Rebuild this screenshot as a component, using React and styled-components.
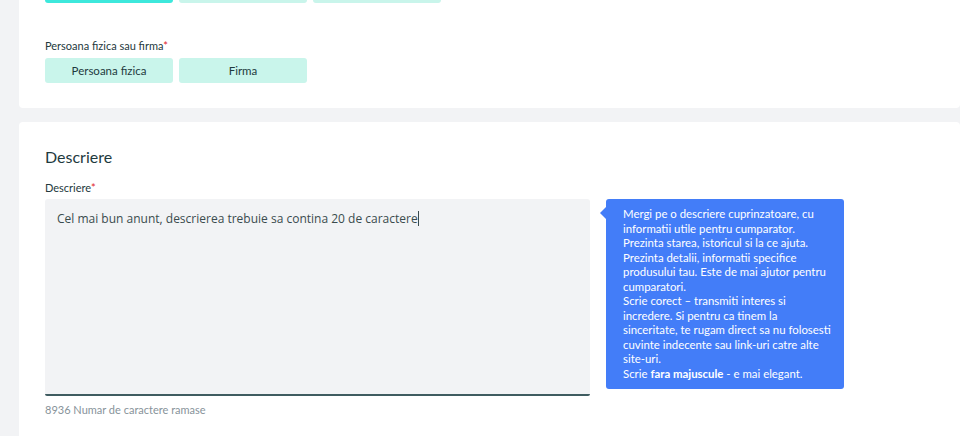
import styled, { createGlobalStyle } from 'styled-components';

const GlobalStyle = createGlobalStyle`
  html, body {
    margin: 0;
    padding: 0;
    background: #f2f3f5;
    font-family: Lato, "Noto Sans", sans-serif;
  }
`;

const Page = styled.div`
  height: 436px;
  overflow: hidden;
  padding-left: 19px;
  display: flex;
  flex-direction: column;
  gap: 14px;
`;

const Card = styled.section`
  background: #ffffff;
  border-radius: 4px;
  padding: ${(p) => p.$padding};
  margin-top: ${(p) => p.$offset || '0'};
  display: flex;
  flex-direction: column;
`;

const ButtonRow = styled.div`
  display: flex;
  gap: 6px;
  margin-bottom: ${(p) => p.$gap || '0'};
`;

const Choice = styled.button`
  width: 128px;
  height: 25px;
  border: none;
  border-radius: 3px;
  background: ${(p) => (p.$active ? '#3de8dc' : '#c9f5eb')};
  color: #1e3a3e;
  font-family: Lato, "Noto Sans", sans-serif;
  font-size: 11.5px;
  padding: 0;
`;

const Label = styled.div`
  font-size: 11px;
  color: #24393d;
  line-height: 14px;
  margin-bottom: ${(p) => p.$gap || '5px'};
`;

const Star = styled.span`
  color: #e0242b;
`;

const Heading = styled.h2`
  margin: 0 0 14px;
  font-size: 16px;
  font-weight: 400;
  color: #1e3a3e;
  line-height: 20px;
`;

const FieldRow = styled.div`
  display: flex;
  align-items: flex-start;
  gap: 16px;
`;

const TextBox = styled.div`
  width: 545px;
  height: 197px;
  box-sizing: border-box;
  background: #f2f3f5;
  border-bottom: 2px solid #3f5c60;
  border-radius: 3px 3px 2px 2px;
  padding: 11px 12px;
  font-family: "Open Sans", "Noto Sans", sans-serif;
  font-size: 12px;
  color: #3a4b4e;
  line-height: 18px;
`;

const Caret = styled.span`
  display: inline-block;
  width: 1px;
  height: 15px;
  background: #3a4b4e;
  vertical-align: -3px;
`;

const Counter = styled.div`
  margin-top: 7px;
  font-size: 11px;
  color: #87939a;
`;

const Tip = styled.div`
  position: relative;
  width: 238px;
  box-sizing: border-box;
  background: #437df8;
  border-radius: 3px;
  padding: 8px 10px 8px 17px;
  color: #ffffff;
  font-size: 11.4px;
  line-height: 14.5px;

  &::before {
    content: '';
    position: absolute;
    left: -6px;
    top: 8px;
    border-top: 6px solid transparent;
    border-bottom: 6px solid transparent;
    border-right: 6px solid #437df8;
  }

  b {
    font-weight: 700;
  }
`;

export default function App() {
  return (
    <>
      <GlobalStyle />
      <Page>
        <Card $offset="-22px" $padding="0 26px 25px">
          <ButtonRow $gap="36px">
            <Choice $active />
            <Choice />
            <Choice />
          </ButtonRow>
          <Label>
            Persoana fizica sau firma<Star>*</Star>
          </Label>
          <ButtonRow>
            <Choice>Persoana fizica</Choice>
            <Choice>Firma</Choice>
          </ButtonRow>
        </Card>
        <Card $padding="25px 26px 30px">
          <Heading>Descriere</Heading>
          <Label $gap="4px">
            Descriere<Star>*</Star>
          </Label>
          <FieldRow>
            <div>
              <TextBox>
                Cel mai bun anunt, descrierea trebuie sa contina 20 de caractere
                <Caret />
              </TextBox>
              <Counter>8936 Numar de caractere ramase</Counter>
            </div>
            <Tip>
              Mergi pe o descriere cuprinzatoare, cu informatii utile pentru
              cumparator.
              <br />
              Prezinta starea, istoricul si la ce ajuta.
              <br />
              Prezinta detalii, informatii specifice produsului tau. Este de
              mai ajutor pentru cumparatori.
              <br />
              Scrie corect – transmiti interes si incredere. Si pentru ca tinem
              la sinceritate, te rugam direct sa nu folosesti cuvinte indecente
              sau link-uri catre alte site-uri.
              <br />
              Scrie <b>fara majuscule</b> - e mai elegant.
            </Tip>
          </FieldRow>
        </Card>
      </Page>
    </>
  );
}
